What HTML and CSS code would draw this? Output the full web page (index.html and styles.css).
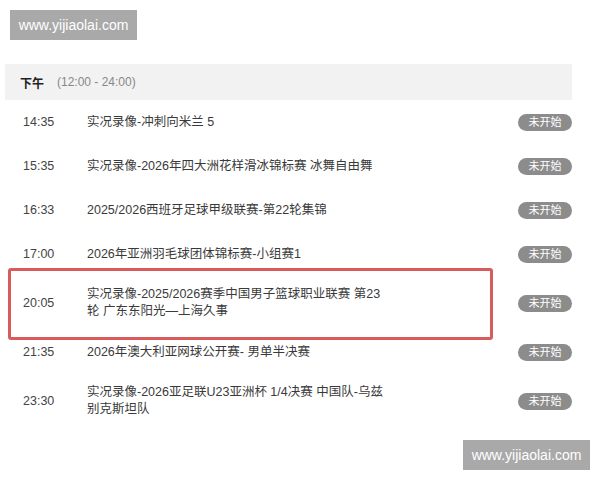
FILE: index.html
```html
<!DOCTYPE html>
<html lang="zh-CN">
<head>
  <meta charset="UTF-8" />
  <meta name="viewport" content="width=device-width, initial-scale=1.0"/>
  <title>赛事直播表</title>
  <link rel="stylesheet" href="styles.css">
</head>
<body>

  <div class="page">
    <div class="schedule">
      <div class="period">
        <span class="period-name">下午</span>
        <span class="period-time">(12:00 - 24:00)</span>
      </div>

      <div class="row">
        <span class="time">14:35</span>
        <span class="title">实况录像-冲刺向米兰 5</span>
        <span class="status">未开始</span>
      </div>
      <div class="row">
        <span class="time">15:35</span>
        <span class="title">实况录像-2026年四大洲花样滑冰锦标赛 冰舞自由舞</span>
        <span class="status">未开始</span>
      </div>
      <div class="row">
        <span class="time">16:33</span>
        <span class="title">2025/2026西班牙足球甲级联赛-第22轮集锦</span>
        <span class="status">未开始</span>
      </div>
      <div class="row">
        <span class="time">17:00</span>
        <span class="title">2026年亚洲羽毛球团体锦标赛-小组赛1</span>
        <span class="status">未开始</span>
      </div>
      <div class="row highlight">
        <span class="time">20:05</span>
        <span class="title">实况录像-2025/2026赛季中国男子篮球职业联赛 第23轮 广东东阳光—上海久事</span>
        <span class="status">未开始</span>
        <div class="mark"></div>
      </div>
      <div class="row">
        <span class="time">21:35</span>
        <span class="title">2026年澳大利亚网球公开赛- 男单半决赛</span>
        <span class="status">未开始</span>
      </div>
      <div class="row">
        <span class="time">23:30</span>
        <span class="title">实况录像-2026亚足联U23亚洲杯 1/4决赛 中国队-乌兹别克斯坦队</span>
        <span class="status">未开始</span>
      </div>
    </div>

    <div class="watermark top">www.yijiaolai.com</div>
    <div class="watermark bottom">www.yijiaolai.com</div>
  </div>

</body>
</html>
```

FILE: styles.css
```css
* {
  box-sizing: border-box;
  margin: 0;
  padding: 0;
}

body {
  font-family: "Liberation Sans", "Noto Sans CJK SC", sans-serif;
  background: #fff;
  color: #333;
}

.page {
  position: relative;
  width: 600px;
  height: 480px;
  padding: 64px 0 0 5px;
  overflow: hidden;
}

.schedule {
  width: 567px;
}

.period {
  display: flex;
  align-items: center;
  height: 36px;
  padding-left: 15px;
  background: #f2f2f2;
  font-size: 12px;
}

.period-name {
  font-weight: bold;
  color: #222;
  width: 37px;
}

.period-time {
  color: #888;
}

.row {
  position: relative;
  display: flex;
  align-items: center;
  min-height: 44px;
  padding: 10px 0 10px 18px;
  font-size: 12.5px;
  line-height: 17px;
}

.time {
  width: 64px;
  flex-shrink: 0;
  color: #444;
}

.title {
  width: 296px;
  color: #3a3a3a;
}

.status {
  margin-left: auto;
  width: 54px;
  height: 17px;
  border-radius: 9px;
  background: #8c8c8c;
  color: #fff;
  font-size: 11px;
  line-height: 17px;
  text-align: center;
}

.mark {
  position: absolute;
  top: -8px;
  bottom: -10px;
  left: 3px;
  width: 485px;
  border: 3px solid #d95b5b;
  border-radius: 3px;
}

.watermark {
  position: absolute;
  width: 127px;
  height: 30px;
  background: #a9a9a9;
  color: #fff;
  font-size: 14px;
  line-height: 30px;
  text-align: center;
}

.watermark.top {
  top: 10px;
  left: 10px;
}

.watermark.bottom {
  top: 440px;
  left: 463px;
}
```
